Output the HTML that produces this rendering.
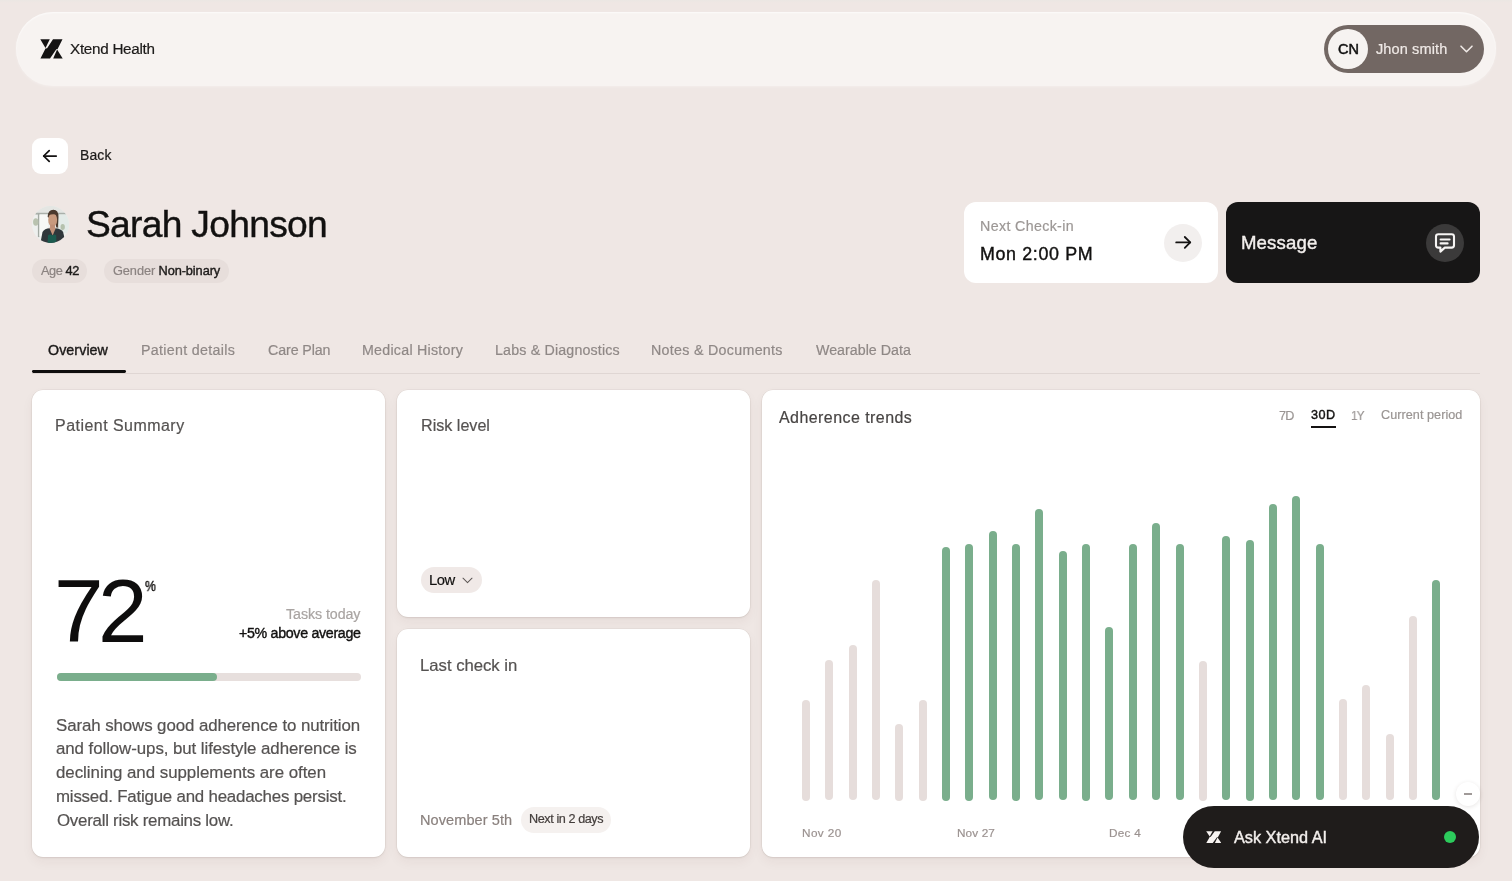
<!DOCTYPE html>
<html><head><meta charset="utf-8"><title>Xtend Health</title>
<style>
*{margin:0;padding:0;box-sizing:border-box}
html,body{width:1512px;height:881px;overflow:hidden}
body{background:#efe7e4;font-family:"Liberation Sans",sans-serif;position:relative}
#root{position:absolute;left:0;top:0;width:1512px;height:881px;overflow:hidden;background:#efe7e4}
.t{position:absolute;white-space:nowrap;line-height:1;font-family:"Liberation Sans",sans-serif;will-change:transform}
.s{position:absolute}
.card{position:absolute;background:#fff;border-radius:11px;box-shadow:0 0 0 0.5px rgba(70,45,35,0.07),0 1px 2px rgba(70,45,35,0.08),0 5px 12px rgba(70,45,35,0.05)}
.bar{position:absolute;width:8px;border-radius:4px}


</style></head>
<body>
<div id="root">

<!-- header -->
<div class="s" style="left:16px;top:12px;width:1480px;height:74px;border-radius:37px;background:#f7f3f1;box-shadow:inset 0 1px 2px rgba(255,255,255,0.7),0 1px 3px rgba(255,255,255,0.3)"></div>
<div class="s" style="left:0;top:0;width:1512px;height:3px;background:linear-gradient(#ebe7e3,rgba(239,231,228,0))"></div>
<svg class="s" style="left:40px;top:39px" width="23" height="20" viewBox="0 0 23 20"><g fill="#141212"><polygon points="0.3,0.3 9.8,0.3 5.5,9.0"/><polygon points="13,0.3 22.5,0.3 17.6,10 16.3,10.2 10,19.4 0.45,19.4 5.5,9.6 7.1,9.3"/><polygon points="17.1,10.4 22.7,19.4 13.2,19.4"/></g></svg>
<div class="s" style="left:1324px;top:25px;width:160px;height:48px;border-radius:24px;background:#726763"></div>
<div class="s" style="left:1328px;top:29px;width:40px;height:40px;border-radius:20px;background:#f6f3f1"></div>
<svg class="s" style="left:1459px;top:44px" width="15" height="10" viewBox="0 0 15 10"><polyline points="2,2.2 7.5,7.7 13,2.2" fill="none" stroke="#efe9e6" stroke-width="1.6" stroke-linecap="round" stroke-linejoin="round"/></svg>

<!-- back -->
<div class="s" style="left:32px;top:138px;width:36px;height:36px;border-radius:9px;background:#fff"></div>
<svg class="s" style="left:40px;top:146px" width="20" height="20" viewBox="0 0 20 20"><g fill="none" stroke="#141212" stroke-width="1.75" stroke-linecap="round" stroke-linejoin="round"><line x1="3.8" y1="10" x2="16.2" y2="10"/><polyline points="9.2,4.6 3.7,10 9.2,15.4"/></g></svg>

<!-- avatar -->
<svg class="s" style="left:32px;top:206px" width="37" height="37" viewBox="0 0 44 44">
<defs><clipPath id="av"><circle cx="22" cy="22" r="22"/></clipPath></defs>
<g clip-path="url(#av)">
<rect x="0" y="0" width="44" height="44" fill="#eef0ee"/>
<rect x="0" y="0" width="44" height="8" fill="#e4e6e3"/>
<rect x="4" y="8" width="37" height="2.2" fill="#aab0aa"/>
<rect x="7" y="9" width="1.8" height="28" fill="#a3aaa3"/>
<rect x="30" y="9" width="1.6" height="18" fill="#b3b8b2"/>
<rect x="9" y="10" width="10" height="26" fill="#f7f8f6"/>
<rect x="32" y="10" width="12" height="22" fill="#e3ebe8"/>
<ellipse cx="4.5" cy="19" rx="3.2" ry="4.5" fill="#b9c2af"/>
<ellipse cx="36.5" cy="25" rx="2.6" ry="3.6" fill="#b5c1ad"/>
<path d="M18.6 13 Q19 4.5 25.5 4.6 Q31.6 4.8 31.4 13 L30.8 25 Q29.5 27 28.5 24 L28 18 Z" fill="#4b3a2e"/>
<ellipse cx="24.6" cy="16.6" rx="5.3" ry="8.2" fill="#c89a7e"/>
<path d="M19 9.5 Q22 5.8 27 6.6 Q30 8 30.2 11 Q26 8.6 19 11 Z" fill="#4b3a2e"/>
<path d="M10 44 L12.5 31 Q15 27 21 26.6 L28.5 26.4 Q34.5 27 37 31 L40 44 Z" fill="#30373b"/>
<rect x="21.5" y="22" width="6" height="6" fill="#bf8f76"/><path d="M20.5 26 L28.4 26 L24.6 35 Z" fill="#c3937a"/>
<path d="M18.5 44 L19 35 Q21 32.5 24.5 35.2 Q27 32.5 28.8 35 L29 44 Z" fill="#1c5b4f"/>
</g></svg>

<!-- chips -->
<div class="s" style="left:32px;top:259px;width:55px;height:24px;border-radius:12px;background:#e7dedb"></div>
<div class="s" style="left:104px;top:259px;width:125px;height:24px;border-radius:12px;background:#e7dedb"></div>

<!-- check-in card -->
<div class="s" style="left:964px;top:202px;width:254px;height:81px;border-radius:12px;background:#fff"></div>
<div class="s" style="left:1164px;top:223.5px;width:38px;height:38px;border-radius:19px;background:#f2efee"></div>
<svg class="s" style="left:1173px;top:232px" width="20" height="20" viewBox="0 0 20 20"><g fill="none" stroke="#141212" stroke-width="1.8" stroke-linecap="round" stroke-linejoin="round"><line x1="3.2" y1="10.4" x2="17.2" y2="10.4"/><polyline points="11.8,5.0 17.2,10.4 11.8,15.8"/></g></svg>

<!-- message card -->
<div class="s" style="left:1226px;top:202px;width:254px;height:81px;border-radius:12px;background:#171616"></div>
<div class="s" style="left:1425.7px;top:223.7px;width:38px;height:38px;border-radius:19px;background:#3b3a3a"></div>
<svg class="s" style="left:1434px;top:232px" width="22" height="22" viewBox="0 0 22 22"><g fill="none" stroke="#f7f5f4" stroke-width="2.1" stroke-linejoin="round" stroke-linecap="round"><path d="M4.4 2.2 H17.6 Q20 2.2 20 4.6 V13.2 Q20 15.6 17.6 15.6 H10.8 L6.4 19.6 V15.6 H4.4 Q2 15.6 2 13.2 V4.6 Q2 2.2 4.4 2.2 Z"/><line x1="6.6" y1="7.5" x2="15.6" y2="7.5"/><line x1="6.6" y1="11.4" x2="13.6" y2="11.4"/></g></svg>

<!-- tabs -->
<div class="s" style="left:32px;top:372.8px;width:1448px;height:1px;background:#dfd6d3"></div>
<div class="s" style="left:32px;top:370px;width:94px;height:2.8px;border-radius:1.4px;background:#0e0d0d"></div>

<!-- cards -->
<div class="s card" style="left:32px;top:389.5px;width:353px;height:467.5px"></div>
<div class="s card" style="left:397px;top:389.5px;width:353px;height:227.5px"></div>
<div class="s card" style="left:397px;top:629px;width:353px;height:228px"></div>
<div class="s card" style="left:762px;top:389.5px;width:718px;height:467.5px"></div>

<!-- progress -->
<div class="s" style="left:56.5px;top:673px;width:304.5px;height:8px;border-radius:4px;background:#e7dfdd"></div>
<div class="s" style="left:56.5px;top:673px;width:160.5px;height:8px;border-radius:4px;background:#7aae8c"></div>

<!-- low chip -->
<div class="s" style="left:421px;top:567.4px;width:60.5px;height:25.5px;border-radius:13px;background:#f0e9e7"></div>
<svg class="s" style="left:461px;top:576px" width="13" height="9" viewBox="0 0 13 9"><polyline points="2,2.2 6.5,6.6 11,2.2" fill="none" stroke="#5f5957" stroke-width="1.05" stroke-linecap="round" stroke-linejoin="round"/></svg>

<!-- next in 2 days chip -->
<div class="s" style="left:521.4px;top:807.4px;width:89.7px;height:25.4px;border-radius:13px;background:#f5f1ef"></div>

<!-- period underline -->
<div class="s" style="left:1311px;top:425.6px;width:25px;height:2.2px;background:#141212"></div>

<!-- bars -->
<div class="s bar" style="left:801.90px;top:700.0px;height:100.5px;background:#e6dddb"></div>
<div class="s bar" style="left:825.25px;top:660.3px;height:140.2px;background:#e6dddb"></div>
<div class="s bar" style="left:848.60px;top:644.9px;height:155.6px;background:#e6dddb"></div>
<div class="s bar" style="left:871.95px;top:580.4px;height:220.1px;background:#e6dddb"></div>
<div class="s bar" style="left:895.30px;top:724.0px;height:76.5px;background:#e6dddb"></div>
<div class="s bar" style="left:918.65px;top:700.0px;height:100.5px;background:#e6dddb"></div>
<div class="s bar" style="left:942.00px;top:547.0px;height:253.5px;background:#7aae8c"></div>
<div class="s bar" style="left:965.35px;top:544.0px;height:256.5px;background:#7aae8c"></div>
<div class="s bar" style="left:988.70px;top:530.9px;height:269.6px;background:#7aae8c"></div>
<div class="s bar" style="left:1012.05px;top:544.0px;height:256.5px;background:#7aae8c"></div>
<div class="s bar" style="left:1035.40px;top:508.9px;height:291.6px;background:#7aae8c"></div>
<div class="s bar" style="left:1058.75px;top:551.2px;height:249.3px;background:#7aae8c"></div>
<div class="s bar" style="left:1082.10px;top:544.0px;height:256.5px;background:#7aae8c"></div>
<div class="s bar" style="left:1105.45px;top:627.1px;height:173.4px;background:#7aae8c"></div>
<div class="s bar" style="left:1128.80px;top:544.2px;height:256.3px;background:#7aae8c"></div>
<div class="s bar" style="left:1152.15px;top:523.1px;height:277.4px;background:#7aae8c"></div>
<div class="s bar" style="left:1175.50px;top:544.2px;height:256.3px;background:#7aae8c"></div>
<div class="s bar" style="left:1198.85px;top:660.5px;height:140.0px;background:#e6dddb"></div>
<div class="s bar" style="left:1222.20px;top:536.3px;height:264.2px;background:#7aae8c"></div>
<div class="s bar" style="left:1245.55px;top:539.5px;height:261.0px;background:#7aae8c"></div>
<div class="s bar" style="left:1268.90px;top:504.3px;height:296.2px;background:#7aae8c"></div>
<div class="s bar" style="left:1292.25px;top:496.3px;height:304.2px;background:#7aae8c"></div>
<div class="s bar" style="left:1315.60px;top:544.2px;height:256.3px;background:#7aae8c"></div>
<div class="s bar" style="left:1338.95px;top:699.3px;height:101.2px;background:#e6dddb"></div>
<div class="s bar" style="left:1362.30px;top:685.4px;height:115.1px;background:#e6dddb"></div>
<div class="s bar" style="left:1385.65px;top:734.1px;height:66.4px;background:#e6dddb"></div>
<div class="s bar" style="left:1409.00px;top:616.1px;height:184.4px;background:#e6dddb"></div>
<div class="s bar" style="left:1432.35px;top:580.1px;height:220.4px;background:#7aae8c"></div>


<!-- minus button -->
<div class="s" style="left:1456px;top:782px;width:24px;height:24px;border-radius:12px;background:#fff;box-shadow:0 1px 4px rgba(60,40,30,0.12)"></div>
<div class="s" style="left:1464px;top:793px;width:8px;height:1.6px;background:#a09a98"></div>

<!-- ask xtend ai -->
<div class="s" style="left:1183px;top:806px;width:296px;height:62px;border-radius:31px;background:#1f1c1b"></div>
<svg class="s" style="left:1205.5px;top:831px" width="15.5" height="12.3" viewBox="0 0 23 20" preserveAspectRatio="none"><g fill="#f7f3f1"><polygon points="0.3,0.3 9.8,0.3 5.5,9.0"/><polygon points="13,0.3 22.5,0.3 17.6,10 16.3,10.2 10,19.4 0.45,19.4 5.5,9.6 7.1,9.3"/><polygon points="17.1,10.4 22.7,19.4 13.2,19.4"/></g></svg>
<div class="s" style="left:1443.8px;top:830.8px;width:12.5px;height:12.5px;border-radius:7px;background:#2ccb5c"></div>

<div class="t" id="brand" style="left:69.57px;top:41.43px;font-size:15.262px;letter-spacing:-0.2854px;color:#1c1a19;-webkit-text-stroke:0.2px #1c1a19;">Xtend Health</div>
<div class="t" id="cn" style="left:1337.94px;top:41.73px;font-size:14.535px;letter-spacing:-0.0761px;color:#111111;-webkit-text-stroke:0.5px #111111;">CN</div>
<div class="t" id="jhon" style="left:1375.54px;top:41.55px;font-size:14.535px;letter-spacing:0.1165px;color:#efe9e6;-webkit-text-stroke:0.2px #efe9e6;">Jhon smith</div>
<div class="t" id="back" style="left:79.60px;top:149.39px;font-size:13.953px;letter-spacing:0.1486px;color:#1c1a19;-webkit-text-stroke:0.2px #1c1a19;">Back</div>
<div class="t" id="name" style="left:85.82px;top:205.69px;font-size:37.209px;letter-spacing:-0.7000px;color:#121110;-webkit-text-stroke:0.4px #121110;">Sarah Johnson</div>
<div class="t" id="age1" style="left:40.66px;top:265.27px;font-size:12.791px;letter-spacing:-0.4319px;color:#8b8381;-webkit-text-stroke:0.2px #8b8381;">Age <span style="color:#1c1a19;-webkit-text-stroke:0.4px #1c1a19">42</span></div>
<div class="t" id="gen1" style="left:112.75px;top:265.27px;font-size:12.791px;letter-spacing:-0.0941px;color:#8b8381;-webkit-text-stroke:0.2px #8b8381;">Gender <span style="color:#1c1a19;-webkit-text-stroke:0.4px #1c1a19">Non-binary</span></div>
<div class="t" id="nci" style="left:979.65px;top:218.74px;font-size:14.244px;letter-spacing:0.3543px;color:#9c9795;-webkit-text-stroke:0.2px #9c9795;">Next Check-in</div>
<div class="t" id="mon" style="left:979.65px;top:245.78px;font-size:17.878px;letter-spacing:0.6391px;color:#121110;-webkit-text-stroke:0.4px #121110;">Mon 2:00 PM</div>
<div class="t" id="msg" style="left:1241.15px;top:234.25px;font-size:18.605px;letter-spacing:0.1315px;color:#f3efed;-webkit-text-stroke:0.4px #f3efed;">Message</div>
<div class="t" id="t1" style="left:48.24px;top:342.63px;font-size:14.244px;letter-spacing:0.0832px;color:#1c1a19;-webkit-text-stroke:0.4px #1c1a19;">Overview</div>
<div class="t" id="t2" style="left:141.15px;top:342.94px;font-size:14.244px;letter-spacing:0.3207px;color:#8f8886;-webkit-text-stroke:0.2px #8f8886;">Patient details</div>
<div class="t" id="t3" style="left:267.70px;top:342.94px;font-size:14.244px;letter-spacing:-0.1034px;color:#8f8886;-webkit-text-stroke:0.2px #8f8886;">Care Plan</div>
<div class="t" id="t4" style="left:361.60px;top:342.94px;font-size:14.244px;letter-spacing:0.2528px;color:#8f8886;-webkit-text-stroke:0.2px #8f8886;">Medical History</div>
<div class="t" id="t5" style="left:495.20px;top:342.94px;font-size:14.244px;letter-spacing:0.1692px;color:#8f8886;-webkit-text-stroke:0.2px #8f8886;">Labs &amp; Diagnostics</div>
<div class="t" id="t6" style="left:651.15px;top:342.94px;font-size:14.244px;letter-spacing:0.3042px;color:#8f8886;-webkit-text-stroke:0.2px #8f8886;">Notes &amp; Documents</div>
<div class="t" id="t7" style="left:816.26px;top:342.94px;font-size:14.244px;letter-spacing:0.0153px;color:#8f8886;-webkit-text-stroke:0.2px #8f8886;">Wearable Data</div>
<div class="t" id="ps" style="left:55.40px;top:418.37px;font-size:15.988px;letter-spacing:0.4748px;color:#555251;-webkit-text-stroke:0.2px #555251;">Patient Summary</div>
<div class="t" id="n72" style="left:53.67px;top:566.58px;font-size:89.099px;letter-spacing:-5.6189px;color:#0e0d0d;">72</div>
<div class="t" id="pct" style="left:144.72px;top:579.99px;font-size:13.800px;letter-spacing:0.0000px;color:#1c1a19;-webkit-text-stroke:0.45px #1c1a19;transform:scaleX(0.8800);transform-origin:0 0;">%</div>
<div class="t" id="tt" style="left:285.80px;top:606.84px;font-size:14.244px;letter-spacing:-0.0729px;color:#a9a4a2;-webkit-text-stroke:0.2px #a9a4a2;">Tasks today</div>
<div class="t" id="avg" style="left:238.67px;top:625.84px;font-size:14.244px;letter-spacing:-0.3180px;color:#121110;-webkit-text-stroke:0.4px #121110;">+5% above average</div>
<div class="t" id="p1" style="left:55.61px;top:717.93px;font-size:16.860px;letter-spacing:-0.0851px;color:#555251;-webkit-text-stroke:0.2px #555251;">Sarah shows good adherence to nutrition</div>
<div class="t" id="p2" style="left:56.37px;top:741.33px;font-size:16.860px;letter-spacing:-0.0693px;color:#555251;-webkit-text-stroke:0.2px #555251;">and follow-ups, but lifestyle adherence is</div>
<div class="t" id="p3" style="left:56.47px;top:765.33px;font-size:16.860px;letter-spacing:-0.0229px;color:#555251;-webkit-text-stroke:0.2px #555251;">declining and supplements are often</div>
<div class="t" id="p4" style="left:55.85px;top:789.33px;font-size:16.860px;letter-spacing:-0.2014px;color:#555251;-webkit-text-stroke:0.2px #555251;">missed. Fatigue and headaches persist.</div>
<div class="t" id="p5" style="left:56.53px;top:813.33px;font-size:16.860px;letter-spacing:-0.2514px;color:#555251;-webkit-text-stroke:0.2px #555251;">Overall risk remains low.</div>
<div class="t" id="rl" style="left:420.85px;top:417.34px;font-size:16.134px;letter-spacing:-0.0065px;color:#555251;-webkit-text-stroke:0.2px #555251;">Risk level</div>
<div class="t" id="low" style="left:428.60px;top:573.15px;font-size:14.826px;letter-spacing:-0.4805px;color:#121110;-webkit-text-stroke:0.2px #121110;">Low</div>
<div class="t" id="lci" style="left:420.40px;top:657.65px;font-size:16.715px;letter-spacing:-0.0144px;color:#555251;-webkit-text-stroke:0.2px #555251;">Last check in</div>
<div class="t" id="nov5" style="left:420.40px;top:812.70px;font-size:14.535px;letter-spacing:0.0826px;color:#8a817e;-webkit-text-stroke:0.2px #8a817e;">November 5th</div>
<div class="t" id="nxt" style="left:528.52px;top:813.30px;font-size:12.645px;letter-spacing:-0.4171px;color:#433d3b;-webkit-text-stroke:0.2px #433d3b;">Next in 2 days</div>
<div class="t" id="adh" style="left:779.22px;top:410.12px;font-size:15.988px;letter-spacing:0.4498px;color:#484544;-webkit-text-stroke:0.2px #484544;">Adherence trends</div>
<div class="t" id="d7" style="left:1278.51px;top:409.65px;font-size:12.645px;letter-spacing:-0.7381px;color:#9a9593;-webkit-text-stroke:0.2px #9a9593;">7D</div>
<div class="t" id="d30" style="left:1310.85px;top:409.23px;font-size:12.645px;letter-spacing:0.4422px;color:#121110;-webkit-text-stroke:0.4px #121110;">30D</div>
<div class="t" id="d1y" style="left:1351.31px;top:409.50px;font-size:12.645px;letter-spacing:-0.8000px;color:#9a9593;-webkit-text-stroke:0.2px #9a9593;transform:scaleX(0.9200);transform-origin:0 0;">1Y</div>
<div class="t" id="dcp" style="left:1381.30px;top:409.00px;font-size:12.645px;letter-spacing:0.0479px;color:#9a9593;-webkit-text-stroke:0.2px #9a9593;">Current period</div>
<div class="t" id="x1" style="left:801.91px;top:826.68px;font-size:11.773px;letter-spacing:0.4118px;color:#9b9290;-webkit-text-stroke:0.2px #9b9290;">Nov 20</div>
<div class="t" id="x2" style="left:956.56px;top:826.88px;font-size:11.773px;letter-spacing:0.1086px;color:#9b9290;-webkit-text-stroke:0.2px #9b9290;">Nov 27</div>
<div class="t" id="x3" style="left:1108.51px;top:826.88px;font-size:11.773px;letter-spacing:0.2500px;color:#9b9290;-webkit-text-stroke:0.2px #9b9290;">Dec 4</div>
<div class="t" id="ask" style="left:1233.73px;top:828.61px;font-size:16.279px;letter-spacing:-0.0116px;color:#f3efed;-webkit-text-stroke:0.4px #f3efed;">Ask Xtend AI</div>

</div>
</body></html>
